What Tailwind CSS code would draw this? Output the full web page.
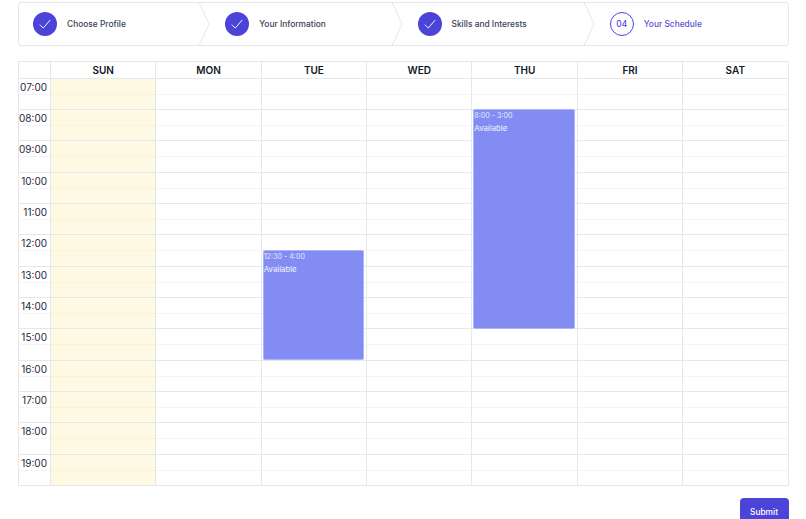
<!doctype html>
<html>
<head>
<meta charset="utf-8">
<script src="https://cdn.jsdelivr.net/npm/@tailwindcss/browser@4"></script>
</head>
<body class="bg-white font-['Inter',sans-serif] w-[806px] h-[519px] overflow-hidden">
<div class="px-[17.5px] pt-[2px]">
  <nav class="flex h-[44px] border border-gray-200 rounded-[3px]">
    <div class="relative flex-1 flex items-center pl-[14.5px] gap-[10px]">
      <span class="w-[24px] h-[24px] rounded-full bg-[#4c43d9] flex items-center justify-center shrink-0"><svg class="w-[14px] h-[14px]" viewBox="0 0 24 24" fill="none" stroke="#fff" stroke-width="1.6"><path d="M3 13l6 6L21 5"/></svg></span>
      <span class="text-[8.4px] font-medium text-gray-700">Choose Profile</span>
      <svg class="absolute right-[0.5px] top-0 w-[12px] h-[42px]" viewBox="0 0 12 42" preserveAspectRatio="none" fill="none" stroke="#e5e7eb"><path d="M1 -1L11 21L1 43"/></svg>
    </div>
    <div class="relative flex-1 flex items-center pl-[14.5px] gap-[10px]">
      <span class="w-[24px] h-[24px] rounded-full bg-[#4c43d9] flex items-center justify-center shrink-0"><svg class="w-[14px] h-[14px]" viewBox="0 0 24 24" fill="none" stroke="#fff" stroke-width="1.6"><path d="M3 13l6 6L21 5"/></svg></span>
      <span class="text-[8.4px] font-medium text-gray-700">Your Information</span>
      <svg class="absolute right-[0.5px] top-0 w-[12px] h-[42px]" viewBox="0 0 12 42" preserveAspectRatio="none" fill="none" stroke="#e5e7eb"><path d="M1 -1L11 21L1 43"/></svg>
    </div>
    <div class="relative flex-1 flex items-center pl-[14.5px] gap-[10px]">
      <span class="w-[24px] h-[24px] rounded-full bg-[#4c43d9] flex items-center justify-center shrink-0"><svg class="w-[14px] h-[14px]" viewBox="0 0 24 24" fill="none" stroke="#fff" stroke-width="1.6"><path d="M3 13l6 6L21 5"/></svg></span>
      <span class="text-[8.4px] font-medium text-gray-700">Skills and Interests</span>
      <svg class="absolute right-[0.5px] top-0 w-[12px] h-[42px]" viewBox="0 0 12 42" preserveAspectRatio="none" fill="none" stroke="#e5e7eb"><path d="M1 -1L11 21L1 43"/></svg>
    </div>
    <div class="relative flex-1 flex items-center pl-[14.5px] gap-[10px]">
      <span class="w-[24px] h-[24px] rounded-full border-[1.3px] border-[#4c43d9] flex items-center justify-center shrink-0 text-[8.4px] font-medium text-[#4c43d9]">04</span>
      <span class="text-[8.4px] font-medium text-[#5a50d8]">Your Schedule</span>
    </div>
  </nav>

  <div class="relative mt-[15px] border border-gray-200 text-[#111827]">
    <div class="grid grid-cols-[31.5px_repeat(7,1fr)] h-[15.5px] text-[10px] font-semibold text-center leading-[16px]">
      <div></div><div class="border-l border-gray-200">SUN</div><div class="border-l border-gray-200">MON</div><div class="border-l border-gray-200">TUE</div><div class="border-l border-gray-200">WED</div><div class="border-l border-gray-200">THU</div><div class="border-l border-gray-200">FRI</div><div class="border-l border-gray-200">SAT</div>
    </div>
    <div class="grid grid-cols-[31.5px_repeat(7,1fr)] h-[31.35px] border-t border-gray-200 bg-[linear-gradient(to_bottom,transparent_15px,#f3f4f6_15px,#f3f4f6_16px,transparent_16px)]"><div class="text-[10px] text-right pr-[3px] leading-[17px] text-gray-800">07:00</div><div class="border-l border-gray-200 bg-amber-100/50"></div><div class="border-l border-gray-200"></div><div class="border-l border-gray-200"></div><div class="border-l border-gray-200"></div><div class="border-l border-gray-200"></div><div class="border-l border-gray-200"></div><div class="border-l border-gray-200"></div></div>
    <div class="grid grid-cols-[31.5px_repeat(7,1fr)] h-[31.35px] border-t border-gray-200 bg-[linear-gradient(to_bottom,transparent_15px,#f3f4f6_15px,#f3f4f6_16px,transparent_16px)]"><div class="text-[10px] text-right pr-[3px] leading-[17px] text-gray-800">08:00</div><div class="border-l border-gray-200 bg-amber-100/50"></div><div class="border-l border-gray-200"></div><div class="border-l border-gray-200"></div><div class="border-l border-gray-200"></div><div class="border-l border-gray-200"></div><div class="border-l border-gray-200"></div><div class="border-l border-gray-200"></div></div>
    <div class="grid grid-cols-[31.5px_repeat(7,1fr)] h-[31.35px] border-t border-gray-200 bg-[linear-gradient(to_bottom,transparent_15px,#f3f4f6_15px,#f3f4f6_16px,transparent_16px)]"><div class="text-[10px] text-right pr-[3px] leading-[17px] text-gray-800">09:00</div><div class="border-l border-gray-200 bg-amber-100/50"></div><div class="border-l border-gray-200"></div><div class="border-l border-gray-200"></div><div class="border-l border-gray-200"></div><div class="border-l border-gray-200"></div><div class="border-l border-gray-200"></div><div class="border-l border-gray-200"></div></div>
    <div class="grid grid-cols-[31.5px_repeat(7,1fr)] h-[31.35px] border-t border-gray-200 bg-[linear-gradient(to_bottom,transparent_15px,#f3f4f6_15px,#f3f4f6_16px,transparent_16px)]"><div class="text-[10px] text-right pr-[3px] leading-[17px] text-gray-800">10:00</div><div class="border-l border-gray-200 bg-amber-100/50"></div><div class="border-l border-gray-200"></div><div class="border-l border-gray-200"></div><div class="border-l border-gray-200"></div><div class="border-l border-gray-200"></div><div class="border-l border-gray-200"></div><div class="border-l border-gray-200"></div></div>
    <div class="grid grid-cols-[31.5px_repeat(7,1fr)] h-[31.35px] border-t border-gray-200 bg-[linear-gradient(to_bottom,transparent_15px,#f3f4f6_15px,#f3f4f6_16px,transparent_16px)]"><div class="text-[10px] text-right pr-[3px] leading-[17px] text-gray-800">11:00</div><div class="border-l border-gray-200 bg-amber-100/50"></div><div class="border-l border-gray-200"></div><div class="border-l border-gray-200"></div><div class="border-l border-gray-200"></div><div class="border-l border-gray-200"></div><div class="border-l border-gray-200"></div><div class="border-l border-gray-200"></div></div>
    <div class="grid grid-cols-[31.5px_repeat(7,1fr)] h-[31.35px] border-t border-gray-200 bg-[linear-gradient(to_bottom,transparent_15px,#f3f4f6_15px,#f3f4f6_16px,transparent_16px)]"><div class="text-[10px] text-right pr-[3px] leading-[17px] text-gray-800">12:00</div><div class="border-l border-gray-200 bg-amber-100/50"></div><div class="border-l border-gray-200"></div><div class="border-l border-gray-200"></div><div class="border-l border-gray-200"></div><div class="border-l border-gray-200"></div><div class="border-l border-gray-200"></div><div class="border-l border-gray-200"></div></div>
    <div class="grid grid-cols-[31.5px_repeat(7,1fr)] h-[31.35px] border-t border-gray-200 bg-[linear-gradient(to_bottom,transparent_15px,#f3f4f6_15px,#f3f4f6_16px,transparent_16px)]"><div class="text-[10px] text-right pr-[3px] leading-[17px] text-gray-800">13:00</div><div class="border-l border-gray-200 bg-amber-100/50"></div><div class="border-l border-gray-200"></div><div class="border-l border-gray-200"></div><div class="border-l border-gray-200"></div><div class="border-l border-gray-200"></div><div class="border-l border-gray-200"></div><div class="border-l border-gray-200"></div></div>
    <div class="grid grid-cols-[31.5px_repeat(7,1fr)] h-[31.35px] border-t border-gray-200 bg-[linear-gradient(to_bottom,transparent_15px,#f3f4f6_15px,#f3f4f6_16px,transparent_16px)]"><div class="text-[10px] text-right pr-[3px] leading-[17px] text-gray-800">14:00</div><div class="border-l border-gray-200 bg-amber-100/50"></div><div class="border-l border-gray-200"></div><div class="border-l border-gray-200"></div><div class="border-l border-gray-200"></div><div class="border-l border-gray-200"></div><div class="border-l border-gray-200"></div><div class="border-l border-gray-200"></div></div>
    <div class="grid grid-cols-[31.5px_repeat(7,1fr)] h-[31.35px] border-t border-gray-200 bg-[linear-gradient(to_bottom,transparent_15px,#f3f4f6_15px,#f3f4f6_16px,transparent_16px)]"><div class="text-[10px] text-right pr-[3px] leading-[17px] text-gray-800">15:00</div><div class="border-l border-gray-200 bg-amber-100/50"></div><div class="border-l border-gray-200"></div><div class="border-l border-gray-200"></div><div class="border-l border-gray-200"></div><div class="border-l border-gray-200"></div><div class="border-l border-gray-200"></div><div class="border-l border-gray-200"></div></div>
    <div class="grid grid-cols-[31.5px_repeat(7,1fr)] h-[31.35px] border-t border-gray-200 bg-[linear-gradient(to_bottom,transparent_15px,#f3f4f6_15px,#f3f4f6_16px,transparent_16px)]"><div class="text-[10px] text-right pr-[3px] leading-[17px] text-gray-800">16:00</div><div class="border-l border-gray-200 bg-amber-100/50"></div><div class="border-l border-gray-200"></div><div class="border-l border-gray-200"></div><div class="border-l border-gray-200"></div><div class="border-l border-gray-200"></div><div class="border-l border-gray-200"></div><div class="border-l border-gray-200"></div></div>
    <div class="grid grid-cols-[31.5px_repeat(7,1fr)] h-[31.35px] border-t border-gray-200 bg-[linear-gradient(to_bottom,transparent_15px,#f3f4f6_15px,#f3f4f6_16px,transparent_16px)]"><div class="text-[10px] text-right pr-[3px] leading-[17px] text-gray-800">17:00</div><div class="border-l border-gray-200 bg-amber-100/50"></div><div class="border-l border-gray-200"></div><div class="border-l border-gray-200"></div><div class="border-l border-gray-200"></div><div class="border-l border-gray-200"></div><div class="border-l border-gray-200"></div><div class="border-l border-gray-200"></div></div>
    <div class="grid grid-cols-[31.5px_repeat(7,1fr)] h-[31.35px] border-t border-gray-200 bg-[linear-gradient(to_bottom,transparent_15px,#f3f4f6_15px,#f3f4f6_16px,transparent_16px)]"><div class="text-[10px] text-right pr-[3px] leading-[17px] text-gray-800">18:00</div><div class="border-l border-gray-200 bg-amber-100/50"></div><div class="border-l border-gray-200"></div><div class="border-l border-gray-200"></div><div class="border-l border-gray-200"></div><div class="border-l border-gray-200"></div><div class="border-l border-gray-200"></div><div class="border-l border-gray-200"></div></div>
    <div class="grid grid-cols-[31.5px_repeat(7,1fr)] h-[31.35px] border-t border-gray-200 bg-[linear-gradient(to_bottom,transparent_15px,#f3f4f6_15px,#f3f4f6_16px,transparent_16px)]"><div class="text-[10px] text-right pr-[3px] leading-[17px] text-gray-800">19:00</div><div class="border-l border-gray-200 bg-amber-100/50"></div><div class="border-l border-gray-200"></div><div class="border-l border-gray-200"></div><div class="border-l border-gray-200"></div><div class="border-l border-gray-200"></div><div class="border-l border-gray-200"></div><div class="border-l border-gray-200"></div></div>

    <div class="absolute left-[244.2px] top-[188.3px] w-[101.2px] h-[109.6px] rounded-[2px] bg-[#828cf2] border border-[#c7d2fe]/60 text-white">
      <div class="text-[7.15px] leading-[10px] mt-[1px] text-white/80">12:30 - 4:00</div>
      <div class="text-[7.8px] leading-[11px] mt-[2px] text-white/90">Available</div>
    </div>
    <div class="absolute left-[454.8px] top-[47.3px] w-[101.6px] h-[219.3px] rounded-[2px] bg-[#828cf2] border border-[#c7d2fe]/60 text-white">
      <div class="text-[7.15px] leading-[10px] mt-[1px] text-white/80">8:00 - 3:00</div>
      <div class="text-[7.8px] leading-[11px] mt-[2px] text-white/90">Available</div>
    </div>
  </div>

  <div class="flex justify-end mt-[12px]">
    <button class="w-[49px] h-[28px] rounded-[4px] bg-[#4c43d9] text-white text-[8.4px] font-medium">Submit</button>
  </div>
</div>
</body>
</html>
